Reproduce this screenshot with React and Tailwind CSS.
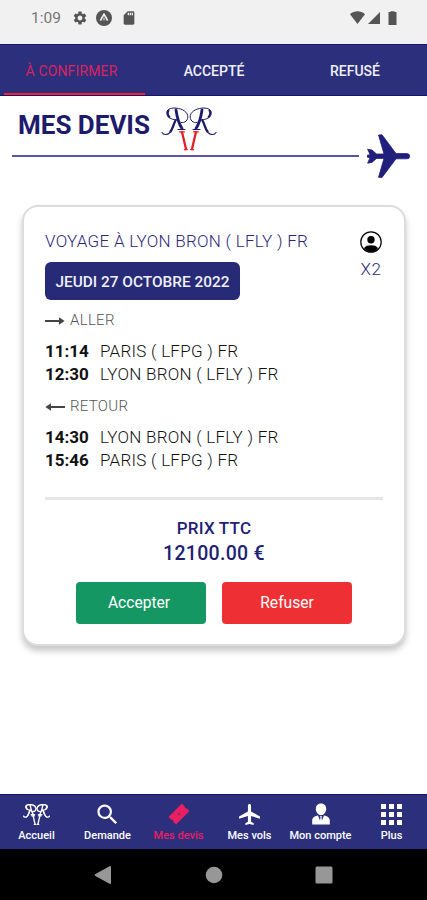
import React, { useState } from 'react';
import { MdSettings, MdSdCard, MdLocalAirport, MdSearch } from 'react-icons/md';

const tabs = ['À CONFIRMER', 'ACCEPTÉ', 'REFUSÉ'];

const trips = [
  {
    label: 'ALLER',
    back: false,
    stops: [
      { time: '11:14', place: 'PARIS ( LFPG ) FR' },
      { time: '12:30', place: 'LYON BRON ( LFLY ) FR' },
    ],
  },
  {
    label: 'RETOUR',
    back: true,
    stops: [
      { time: '14:30', place: 'LYON BRON ( LFLY ) FR' },
      { time: '15:46', place: 'PARIS ( LFPG ) FR' },
    ],
  },
];

function LogoHalf({ accent }) {
  return (
    <g fill="none" stroke="currentColor" strokeLinecap="round">
      <path d="M41 3 C40 10 38 17 35 21.5" strokeWidth="2.8" />
      <path d="M32 22.5 H39" strokeWidth="1.1" />
      <path
        d="M36 15.5 C32 16.5 28.5 13 29.3 8.5 C30.5 3.5 37 1 43 1 C49 1.2 51 4 50 7.5 C49 11.5 44 12.8 39.5 12.8"
        strokeWidth="1"
      />
      <path d="M48.5 3.5 C49.6 5.5 49.3 8 47.6 10" strokeWidth="2" />
      <path d="M41 13 C43.5 17 44 22 47 25.5 C50 28.5 53.5 28 55 25.5" strokeWidth="1.1" />
      <path d="M41.5 13.5 C43.5 17 44 21 46.5 24.5" strokeWidth="2.3" />
      <path d="M35 25 L31 42" stroke={accent} strokeWidth="2.3" />
      <path d="M32.5 24.8 H37.5 M29.6 42.6 H32.6" stroke={accent} strokeWidth="1.3" />
    </g>
  );
}

function Logo({ className, accent = 'currentColor' }) {
  return (
    <svg viewBox="0 0 56 44" className={className} preserveAspectRatio="none">
      <LogoHalf accent={accent} />
      <g transform="translate(56 0) scale(-1 1)">
        <LogoHalf accent={accent} />
      </g>
    </svg>
  );
}

function Arrow({ back }) {
  return (
    <svg viewBox="0 0 20 10" className={`w-5 h-2.5 text-[#444] ${back ? 'rotate-180' : ''}`}>
      <path d="M0 5 H17" stroke="currentColor" strokeWidth="2" />
      <path d="M14 1.2 L19.6 5 L14 8.8 Z" fill="currentColor" />
    </svg>
  );
}

function StatusBar() {
  return (
    <div className="h-11 shrink-0 bg-[#f1f1f1] flex items-center pl-[31px] pr-[28px] pb-2 text-[#555]">
      <span className="text-[15.5px] w-[41px] mt-0.5 text-[#777]">1:09</span>
      <MdSettings className="w-4 h-4" />
      <svg viewBox="0 0 16 16" className="w-4 h-4 ml-2">
        <circle cx="8" cy="8" r="8" fill="currentColor" />
        <path d="M4.4 10.6 C5.4 9 6.6 6.2 8 4.2 C9.4 6.2 10.6 9 11.6 10.6" fill="none" stroke="#f1f1f1" strokeWidth="1.7" />
        <path d="M8 7.6 V10.5" stroke="#f1f1f1" strokeWidth="1" />
      </svg>
      <MdSdCard className="w-4 h-4 ml-[9px]" />
      <svg viewBox="0 0 50 16" className="w-[50px] h-4 ml-auto">
        <g fill="currentColor">
          <path d="M1 4.2 C5.5 .4 11.5 .4 16 4.2 L8.5 14 Z" />
          <path d="M31 2 V14 H19 Z" />
          <path d="M39.5 2 H41.5 V1.2 H45.5 V2 H47.5 V15 H39.5 Z" />
        </g>
      </svg>
    </div>
  );
}

function PersonIcon() {
  return (
    <svg viewBox="0 0 22 22" className="w-[22px] h-[22px] text-black">
      <circle cx="11" cy="11" r="10.2" fill="none" stroke="currentColor" strokeWidth="1.2" />
      <circle cx="11" cy="8.8" r="3.7" fill="currentColor" />
      <path d="M4 17.2 C5.5 14.8 8 14.2 11 14.2 S16.5 14.8 18 17.2 C16.5 19.6 14 21 11 21 S5.5 19.6 4 17.2 Z" fill="currentColor" />
    </svg>
  );
}

function TicketIcon() {
  return (
    <svg viewBox="0 0 22 22" className="w-[22px] h-[22px]">
      <g transform="rotate(-45 11 11)">
        <path d="M1.5 5.6 H20.5 V9.8 A1.3 1.3 0 0 0 20.5 12.3 V16.4 H1.5 V12.3 A1.3 1.3 0 0 0 1.5 9.8 Z" fill="currentColor" />
        <path d="M11 9 L11.7 10.4 L13 11 L11.7 11.6 L11 13 L10.3 11.6 L9 11 L10.3 10.4 Z" fill="#a3276b" />
      </g>
    </svg>
  );
}

function AccountIcon() {
  return (
    <svg viewBox="0 0 22 22" className="w-[22px] h-[22px]">
      <path d="M11 .6 C14.4 .6 16.2 3 16.2 6 C16.2 9.2 13.8 12.2 11 12.2 S5.8 9.2 5.8 6 C5.8 3 7.6 .6 11 .6 Z" fill="currentColor" />
      <path d="M2.2 21.5 V17.5 C2.2 14.5 5 13 8 12.6 L10 17.5 L10.5 14.6 L9.8 13.3 H12.2 L11.5 14.6 L12 17.5 L14 12.6 C17 13 19.8 14.5 19.8 17.5 V21.5 Z" fill="currentColor" />
    </svg>
  );
}

function GridIcon() {
  return (
    <div className="grid grid-cols-3 gap-[3px] w-[21px]">
      {[...Array(9)].map((_, i) => (
        <span key={i} className="w-[5px] h-[5px] bg-white" />
      ))}
    </div>
  );
}

const navItems = [
  { label: 'Accueil', icon: <Logo className="w-[27px] h-[21px] [&_path]:[stroke-width:2.8]" /> },
  { label: 'Demande', icon: <MdSearch className="w-[27px] h-[27px]" /> },
  { label: 'Mes devis', icon: <TicketIcon /> },
  { label: 'Mes vols', icon: <MdLocalAirport className="w-[25px] h-[25px]" /> },
  { label: 'Mon compte', icon: <AccountIcon /> },
  { label: 'Plus', icon: <GridIcon /> },
];

export default function App() {
  const [activeTab, setActiveTab] = useState(0);

  return (
    <div className="w-[427px] h-[900px] flex flex-col bg-white overflow-hidden font-[Roboto,sans-serif]">
      <StatusBar />

      <div className="h-[52px] shrink-0 bg-[#2c2f7b] border-y border-[#15156b] flex">
        {tabs.map((tab, i) => (
          <button
            key={tab}
            onClick={() => setActiveTab(i)}
            className={`w-[142px] text-sm pt-1 border-b-2 ${i === 0 ? 'ml-1 pr-1.5' : 'pr-[3px]'} ${
              i === activeTab
                ? 'text-[#d8245f] border-[#f4222f] tracking-[0.15px]'
                : 'text-[#f0f0fa] font-medium border-transparent'
            }`}
          >
            {tab}
          </button>
        ))}
      </div>

      <div className="h-[84px] shrink-0 relative">
        <div className="flex items-start pl-[18px] pt-[11px]">
          <h1 className="w-[132px] whitespace-nowrap text-[26px] leading-[37px] font-bold text-[#1d1b6c]">MES DEVIS</h1>
          <Logo className="w-14 h-11 ml-[11px] text-[#1d1b6c]" accent="#df2024" />
        </div>
        <div className="absolute left-3 right-[17px] top-[38px] flex items-center text-[#211f7c]">
          <div className="h-[2px] flex-1 bg-[#5d569f]" />
          <svg viewBox="0 0 43 44" className="w-[43px] h-11 ml-2">
            <path
              d="M.6 15.2 L5 16 L9.5 20 H17 L11.5 1 L15 .8 L29 19.6 H40 A2.6 2.6 0 0 1 40 24.8 H29 L15 43.5 L11.5 43.3 L17 24.4 H9.5 L5 28.4 L.6 29.2 L3 23.8 L0 23 V21.4 L3 20.6 Z"
              fill="currentColor"
              stroke="currentColor"
              strokeWidth=".8"
              strokeLinejoin="round"
            />
          </svg>
        </div>
      </div>

      <div className="ml-[22px] mr-[21px] mt-[25px] h-[441px] shrink-0 rounded-[16px] border-2 border-[#dcdcdc] bg-white shadow-[0_5px_6px_rgba(0,0,0,0.22)] px-[21px] pt-[22px]">
        <div className="flex justify-between">
          <div>
            <h2 className="text-[17px] leading-6 tracking-[0.28px] text-[#2b2878] font-light">VOYAGE À LYON BRON ( LFLY ) FR</h2>
            <div className="mt-[9px] w-[195px] h-[38px] rounded-md bg-[#262a77] text-[#f0f0fa] text-[15.4px] font-medium flex items-center justify-center pt-1">
              JEUDI 27 OCTOBRE 2022
            </div>
          </div>
          <div className="flex flex-col items-center w-[26px] -mr-px pt-0.5 text-[17px] text-[#2b2878] font-light">
            <PersonIcon />
            <span className="leading-8 tracking-[0.5px]">X2</span>
          </div>
        </div>

        {trips.map((trip) => (
          <div key={trip.label} className="mt-2.5 mb-[5px]">
            <div className="flex items-center gap-[5px] text-[15px] leading-[21px] tracking-[0.3px] text-[#555] font-light">
              <Arrow back={trip.back} />
              {trip.label}
            </div>
            <div className="mt-[9px]">
              {trip.stops.map((stop) => (
                <div key={stop.time} className="flex text-[17px] leading-[23px] text-[#111]">
                  <span className="w-[55px] font-bold">{stop.time}</span>
                  <span className="font-light tracking-[0.26px]">{stop.place}</span>
                </div>
              ))}
            </div>
          </div>
        ))}

        <div className="mt-[25px] h-[3px] bg-[#e6e6e6]" />

        <div className="mt-4 text-center font-medium text-[#211f74]">
          <p className="text-[17px] leading-[25px] tracking-[0.2px]">PRIX TTC</p>
          <p className="text-[19.5px] leading-[25px] tracking-[0.3px]">12100.00 €</p>
        </div>

        <div className="mt-4 flex justify-center gap-4 text-white text-[15.6px]">
          <button className="w-[130px] h-[42px] pr-1 pt-0.5 rounded bg-[#159763]">Accepter</button>
          <button className="w-[130px] h-[42px] pt-0.5 rounded bg-[#ee3034]">Refuser</button>
        </div>
      </div>

      <nav className="mt-auto h-[55px] shrink-0 bg-[#2c2f7b] border-t border-[#15156b] pl-px grid grid-cols-6 text-white">
        {navItems.map((item) => (
          <div
            key={item.label}
            className={`flex flex-col items-center ${item.label === 'Mes devis' ? 'text-[#e91e63]' : ''}`}
          >
            <div className="h-[22px] mt-2 flex items-center">{item.icon}</div>
            <span className="text-[11px] leading-[14px] mt-1 font-medium whitespace-nowrap">{item.label}</span>
          </div>
        ))}
      </nav>

      <div className="h-[51px] shrink-0 bg-black flex items-center justify-center">
        <svg viewBox="0 0 240 20" className="w-60 h-5 text-[#979797]">
          <g fill="currentColor">
            <path d="M17 2 V18 Q17 19.5 15.5 18.8 L1 10.7 Q0 10 1 9.3 L15.5 1.2 Q17 .6 17 2 Z" />
            <circle cx="120" cy="10" r="8.3" />
            <rect x="221.5" y="1.5" width="17" height="17" rx="1.5" />
          </g>
        </svg>
      </div>
    </div>
  );
}
